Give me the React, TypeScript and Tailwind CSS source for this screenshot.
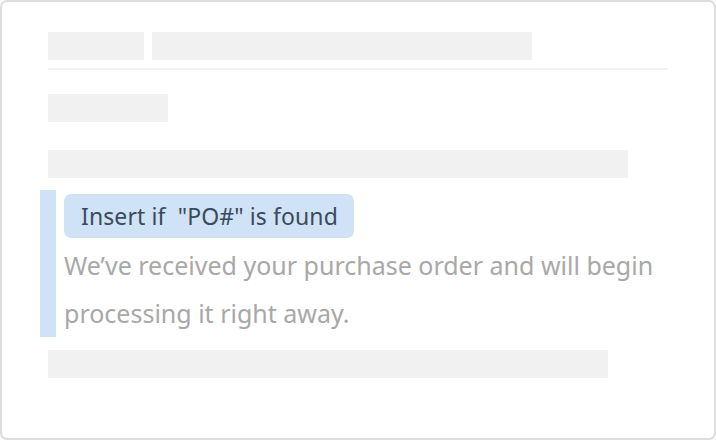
import React from "react";

export default function App() {
  return (
    <div className="w-[716px] h-[440px] bg-white">
      <div
        className="w-[716px] h-[440px] border-2 border-[#dddddd] rounded-[7px] bg-white pl-[46px] pt-[30px]"
        style={{ fontFamily: '"Noto Sans", "Open Sans", sans-serif' }}
      >
        <div className="flex gap-2">
          <div className="w-[96px] h-[28px] bg-[#f1f1f1]" />
          <div className="w-[380px] h-[28px] bg-[#f1f1f1]" />
        </div>
        <div className="mt-2 w-[620px] h-[2px] bg-[#f1f1f1]" />
        <div className="mt-6 w-[120px] h-[28px] bg-[#f1f1f1]" />
        <div className="mt-[28px] w-[580px] h-[28px] bg-[#f1f1f1]" />
        <div className="mt-3 -ml-2 flex gap-2">
          <div className="w-4 bg-[#d0e3f6]" />
          <div className="pt-1">
            <div className="inline-flex h-[44px] w-[290px] items-center rounded-[7px] bg-[#d0e3f6] pl-[17px] text-[23px] leading-[44px] text-[#3b4a5c] whitespace-pre tracking-[0.1px]">
              {'Insert if  "PO#" is found'}
            </div>
            <div className="mt-[3px] w-[620px] text-[25px] leading-[48px] text-[#a8a8a8]">
              We’ve received your purchase order and will begin processing it right away.
            </div>
          </div>
        </div>
        <div className="mt-[13px] w-[560px] h-[28px] bg-[#f1f1f1]" />
      </div>
    </div>
  );
}
